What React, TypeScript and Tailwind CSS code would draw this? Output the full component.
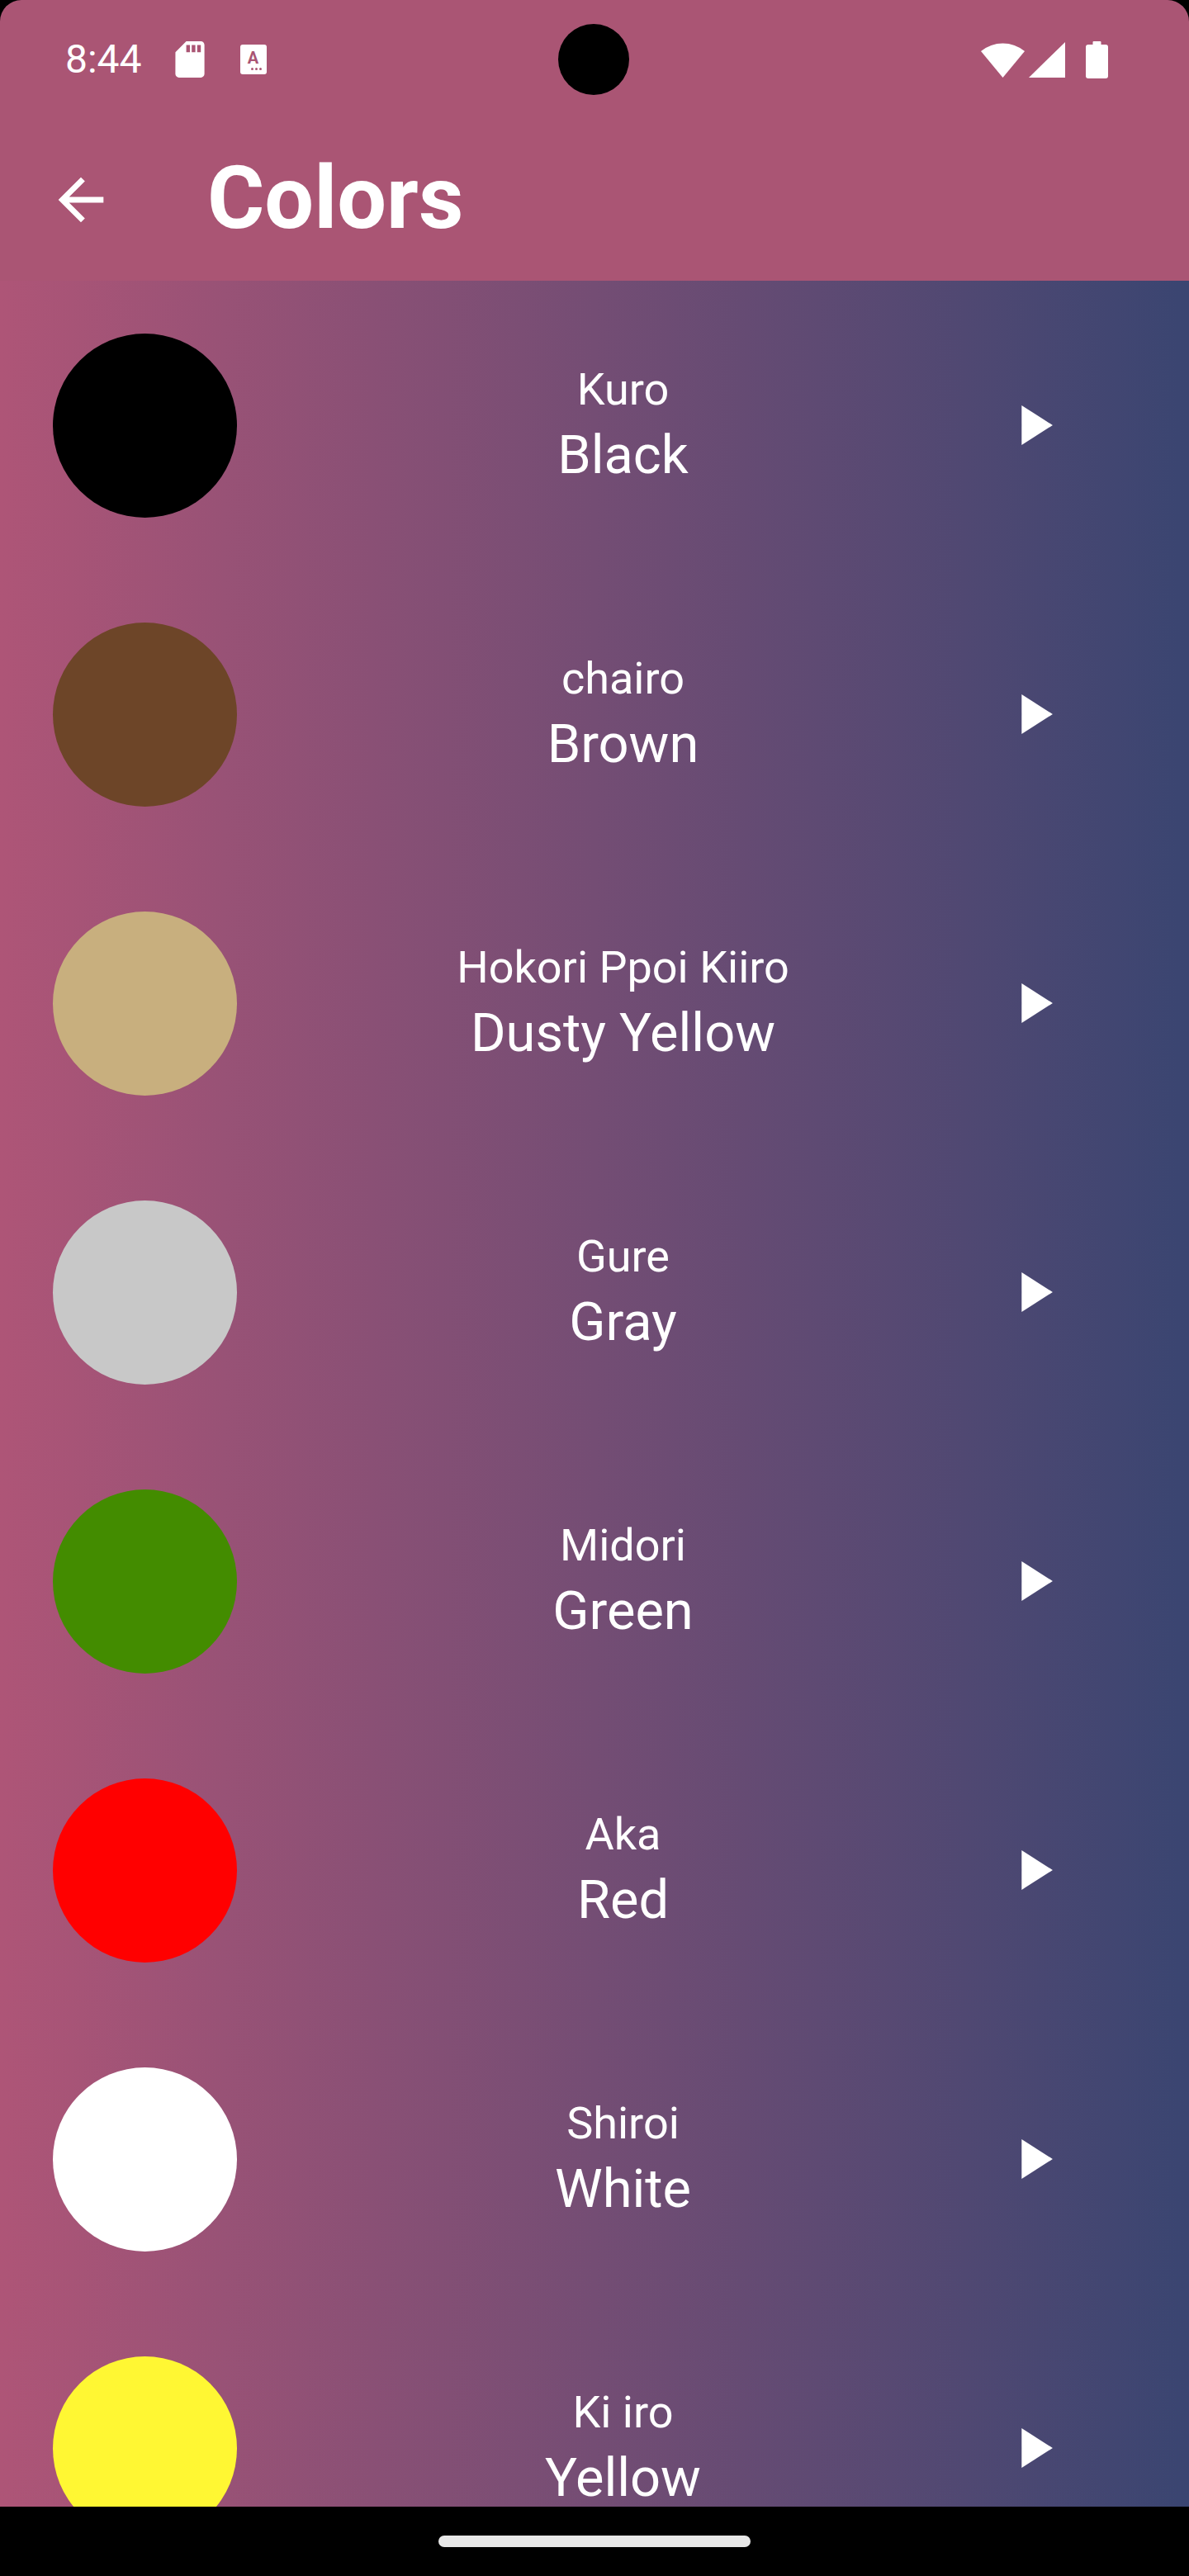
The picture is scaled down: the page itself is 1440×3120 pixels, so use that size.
import React from 'react';

interface ColorItem {
    japanese: string;
    english: string;
    swatch: string;
}

const colors: ColorItem[] = [
    { japanese: 'Kuro', english: 'Black', swatch: 'bg-[#000000]' },
    { japanese: 'chairo', english: 'Brown', swatch: 'bg-[#6D4528]' },
    { japanese: 'Hokori Ppoi Kiiro', english: 'Dusty Yellow', swatch: 'bg-[#C8AF7E]' },
    { japanese: 'Gure', english: 'Gray', swatch: 'bg-[#C8C8C8]' },
    { japanese: 'Midori', english: 'Green', swatch: 'bg-[#438C00]' },
    { japanese: 'Aka', english: 'Red', swatch: 'bg-[#FF0000]' },
    { japanese: 'Shiroi', english: 'White', swatch: 'bg-[#FFFFFF]' },
    { japanese: 'Ki iro', english: 'Yellow', swatch: 'bg-[#FFF733]' },
];

const StatusBar: React.FC = () => (
    <div className="h-[144px] flex items-center pl-[79px] pr-[98px] text-white">
        <span className="text-[48px] leading-none font-['Roboto',sans-serif]">8:44</span>
        {/* sd card */}
        <svg viewBox="4 2 16 20" className="w-[36px] h-[44px] ml-[40px]" fill="white">
            <path d="M18 2h-8L4.02 8 4 20c0 1.1.9 2 2 2h12c1.1 0 2-.9 2-2V4c0-1.1-.9-2-2-2zm-6 6h-2V4h2v4zm3 0h-2V4h2v4zm3 0h-2V4h2v4z" />
        </svg>
        {/* keyboard / text notification */}
        <div className="ml-[43px] w-[32px] h-[36px] bg-white rounded-[3px] flex flex-col items-center justify-center">
            <span className="text-[20px] leading-none font-bold text-[#AA5574] font-['Roboto',sans-serif]">A</span>
            <div className="flex gap-[2px] mt-[2px] ml-[8px]">
                <div className="w-[3px] h-[3px] rounded-full bg-[#AA5574]" />
                <div className="w-[3px] h-[3px] rounded-full bg-[#AA5574]" />
                <div className="w-[3px] h-[3px] rounded-full bg-[#AA5574]" />
            </div>
        </div>
        <div className="flex-1" />
        {/* wifi */}
        <svg viewBox="0 0 53 44" className="w-[53px] h-[44px]" fill="white">
            <path d="M0 12 A42 42 0 0 1 53 12 L26.5 44 Z" />
        </svg>
        {/* signal */}
        <svg viewBox="0 0 44 43" className="w-[44px] h-[43px] ml-[5px]" fill="white">
            <path d="M44 0 L44 43 L0 43 Z" />
        </svg>
        {/* battery */}
        <svg viewBox="0 0 27 45" className="w-[27px] h-[45px] ml-[25px]" fill="white">
            <rect x="8.5" y="0" width="10" height="6" rx="1" />
            <rect x="0" y="4" width="27" height="41" rx="3" />
        </svg>
    </div>
);

const AppBar: React.FC = () => (
    <div className="h-[196px] flex items-center">
        <svg viewBox="0 0 24 24" className="w-[82px] h-[82px] ml-[57px]" fill="white">
            <path d="M20 11H7.83l5.59-5.59L12 4l-8 8 8 8 1.41-1.41L7.83 13H20v-2z" />
        </svg>
        <h1 className="ml-[112px] text-[106px] leading-none font-bold text-white font-['Roboto',sans-serif] -mt-[4px]">
            Colors
        </h1>
    </div>
);

const ColorRow: React.FC<{ item: ColorItem }> = ({ item }) => (
    <div className="h-[350px] shrink-0 flex items-center pr-[148px]">
        <div className={`ml-[64px] w-[223px] h-[223px] rounded-full shrink-0 ${item.swatch}`} />
        <div className="flex-1 pl-[12px] flex flex-col items-center text-white font-['Roboto',sans-serif]">
            <span className="text-[54px] leading-[62px]">{item.japanese}</span>
            <span className="text-[65px] leading-[76px] mt-[10px]">{item.english}</span>
        </div>
        <svg viewBox="0 0 24 24" className="w-[82px] h-[82px] shrink-0" fill="white">
            <path d="M8 5v14l11-7z" />
        </svg>
    </div>
);

export default function App() {
    return (
        <div className="w-[1440px] h-[3120px] bg-black relative overflow-hidden">
            <div className="h-full flex flex-col rounded-t-[26px] overflow-hidden">
                <div className="h-[340px] shrink-0 bg-[#AA5574]">
                    <StatusBar />
                    <AppBar />
                </div>
                <div className="flex-1 min-h-0 overflow-hidden flex flex-col bg-[linear-gradient(to_right,#AE5577,#3A4571)]">
                    {colors.map((c) => (
                        <ColorRow key={c.english} item={c} />
                    ))}
                </div>
                <div className="h-[84px] shrink-0 bg-black flex justify-center pt-[35px]">
                    <div className="w-[378px] h-[14px] rounded-full bg-[#E8E8E8]" />
                </div>
            </div>
            {/* camera cutout */}
            <div className="absolute left-[676px] top-[29px] w-[86px] h-[86px] rounded-full bg-black" />
        </div>
    );
}
